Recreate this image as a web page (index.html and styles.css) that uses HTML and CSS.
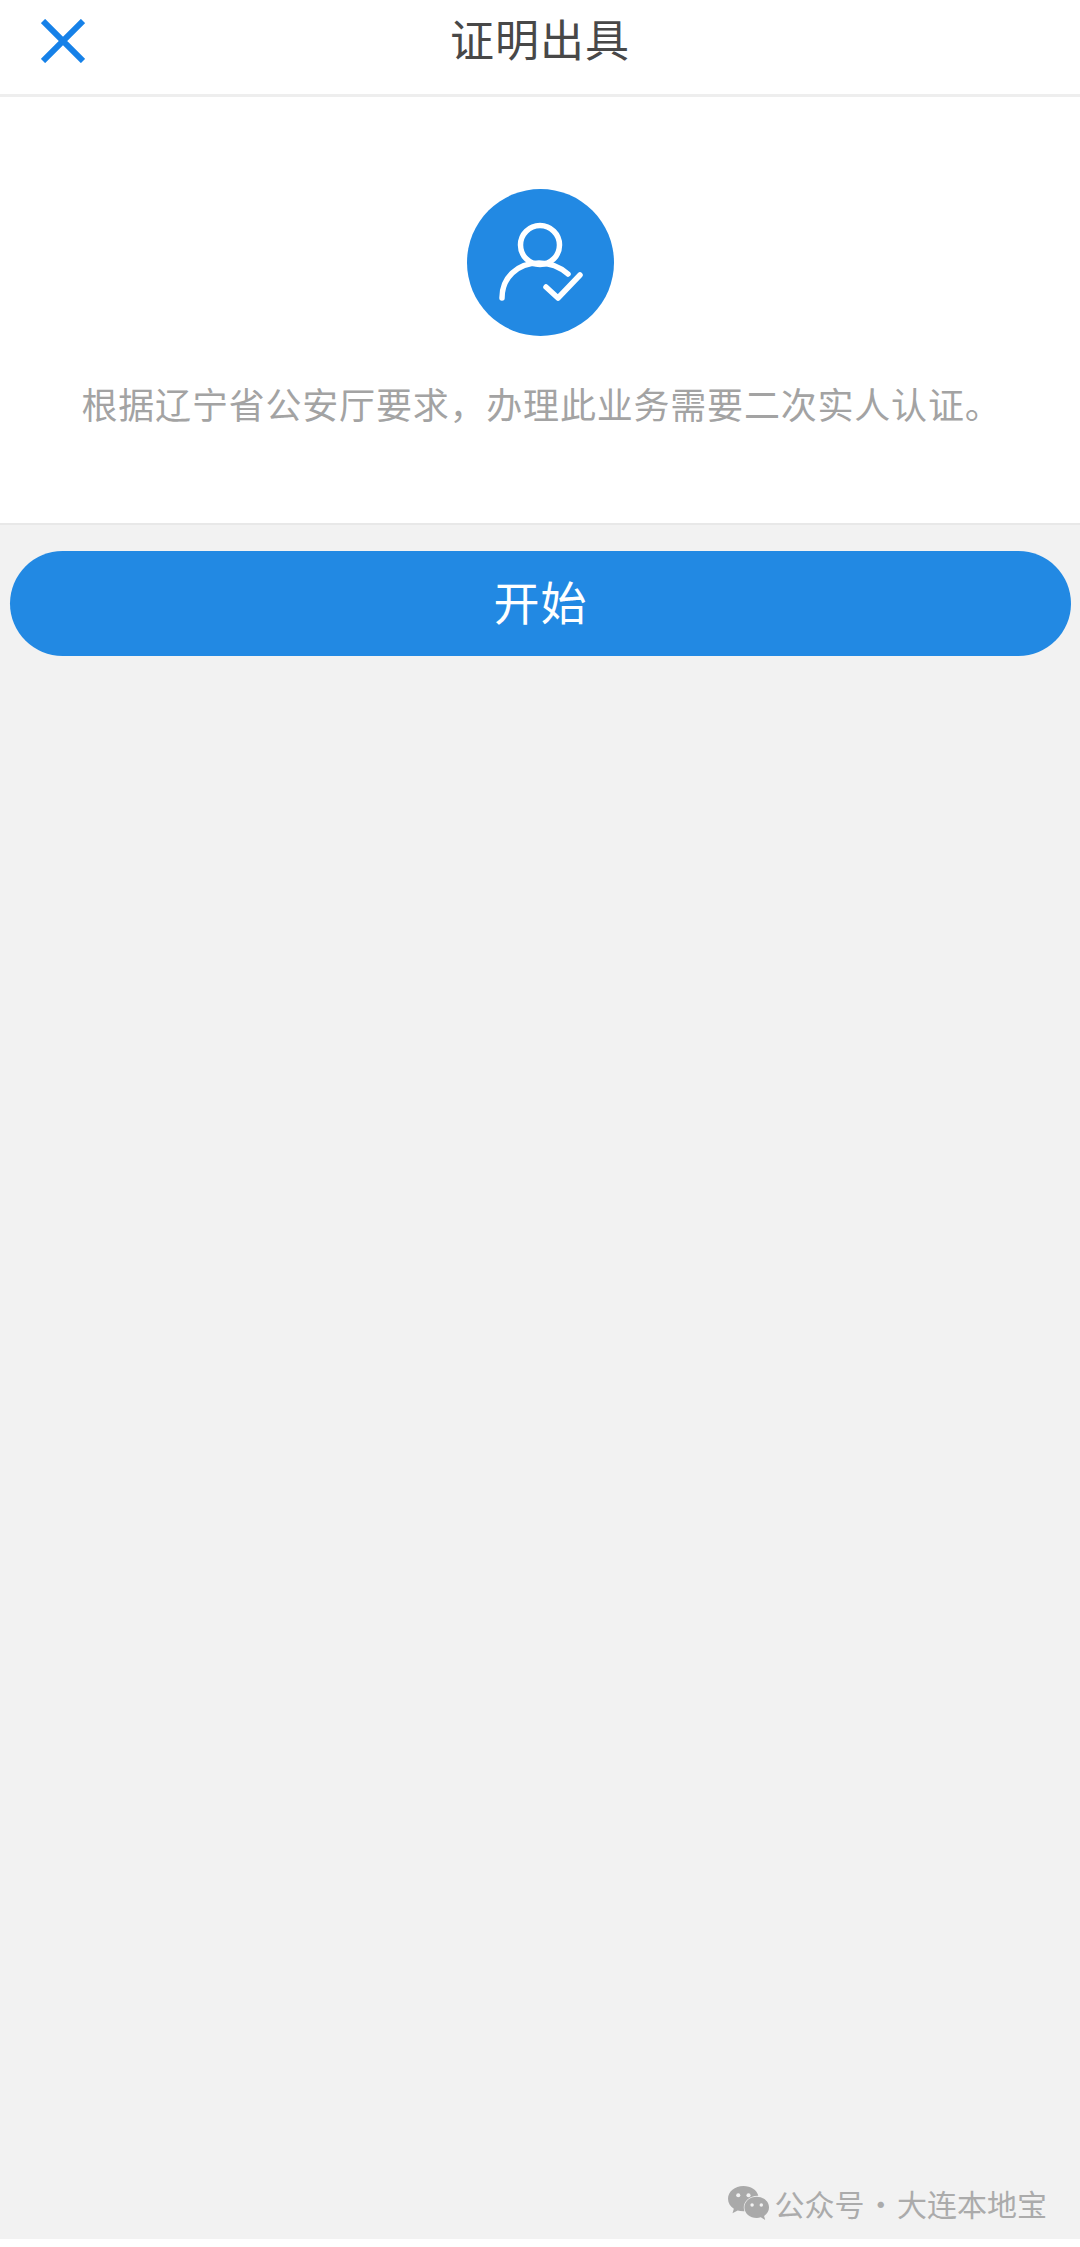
FILE: index.html
```html
<!DOCTYPE html>
<html lang="zh-CN">
<head>
<meta charset="utf-8">
<title>证明出具</title>
<link rel="stylesheet" href="styles.css">
</head>
<body>
<div class="page">
  <header class="nav">
    <svg class="close" viewBox="0 0 44 44" width="44" height="44"><path d="M2 2 L42 42 M42 2 L2 42" fill="none" stroke="#1681e8" stroke-width="6"/></svg>
    <h1 class="title">证明出具</h1>
  </header>
  <section class="intro">
    <div class="avatar">
      <svg viewBox="0 0 147 147" width="147" height="147">
        <g fill="none" stroke="#fff" stroke-width="5.500" stroke-linecap="round" stroke-linejoin="round">
          <circle cx="73" cy="56" r="19.500"/>
          <path d="M35 109 C35 89 50 74 72 74 C83 74 93 78 101 85"/>
          <path d="M79 98 L91 109 L113 86"/>
        </g>
      </svg>
    </div>
    <p class="notice">根据辽宁省公安厅要求，办理此业务需要二次实人认证。</p>
  </section>
  <button class="start">开始</button>
  <footer class="mark">
    <svg class="wechat" viewBox="0 0 40 34" width="41" height="35">
      <path fill="#a9a9a9" d="M15 0C6.7 0 0 5.500 0 12.400c0 4 2.200 7.400 5.700 9.700L4.400 26.500l5-2.700c1.700.5 3.600.8 5.600.8h1c-.4-1.200-.6-2.400-.6-3.600 0-6.500 6-11.500 13.400-11.500h.8C28.300 3.800 22.200 0 15 0z"/>
      <path fill="#a9a9a9" d="M40 20.800c0-5.700-5.400-10.300-12-10.300S16 15.100 16 20.800s5.400 10.300 12 10.300c1.400 0 2.700-.2 4-.6l4.300 2.500-1.100-3.900c2.900-1.900 4.800-5 4.800-8.300z"/>
      <circle cx="10" cy="9" r="2" fill="#f2f2f2"/><circle cx="20" cy="9" r="2" fill="#f2f2f2"/>
      <circle cx="23.500" cy="18.500" r="1.700" fill="#f2f2f2"/><circle cx="32.500" cy="18.500" r="1.700" fill="#f2f2f2"/>
    </svg>
    <span class="mark-text">公众号 · 大连本地宝</span>
  </footer>
</div>
</body>
</html>
```
FILE: styles.css
```css
* { box-sizing: border-box; }
html, body { margin: 0; padding: 0; background: #fff; }
body { font-family: "Noto Sans CJK SC", "Liberation Sans", sans-serif; }
.page { width: 1080px; height: 2239px; background: #f2f2f2; display: flex; flex-direction: column; overflow: hidden; }
.nav { height: 97px; background: #fff; border-bottom: 3px solid #eeeeee; position: relative; display: flex; align-items: center; justify-content: center; padding-bottom: 18px; flex: none; }
.close { position: absolute; left: 41px; top: 19px; }
.title { margin: 0; font-size: 44px; font-weight: 400; color: #484848; line-height: 64px; letter-spacing: 1px; }
.intro { height: 428px; background: #fff; border-bottom: 2px solid #e8e8e8; display: flex; flex-direction: column; align-items: center; padding-top: 92px; flex: none; }
.avatar { width: 147px; height: 147px; border-radius: 50%; background: #2289e3; flex: none; }
.avatar svg { display: block; }
.notice { margin: 37px 0 0 3px; font-size: 36px; letter-spacing: 0.8px; line-height: 60px; color: #a3a3a3; white-space: nowrap; }
.start { display: block; flex: none; margin: 26px 10px 0; width: 1061px; height: 105px; border: 0; border-radius: 53px; background: #2289e3; color: #fff; font-family: inherit; font-size: 46px; letter-spacing: 1px; padding: 0 0 8px; }
.mark { margin-top: auto; height: 66px; display: flex; align-items: center; justify-content: flex-end; gap: 6px; padding-right: 33px; padding-bottom: 6px; flex: none; }
.wechat { flex: none; }
.mark-text { font-size: 30px; line-height: 40px; color: #ababab; white-space: nowrap; word-spacing: -5.500px; }
```
